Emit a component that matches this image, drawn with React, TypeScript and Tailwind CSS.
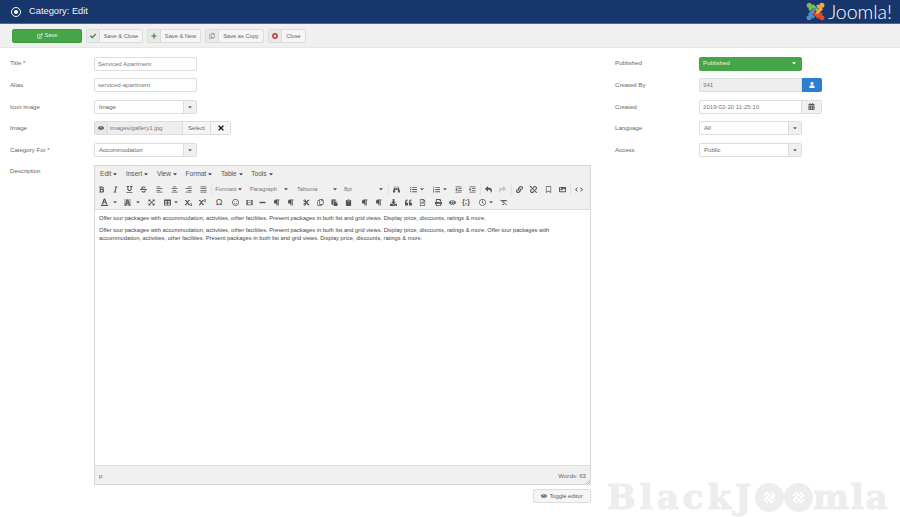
import React from 'react';
import {
  FaBold, FaItalic, FaUnderline, FaStrikethrough, FaAlignLeft, FaAlignCenter, FaAlignRight, FaAlignJustify,
  FaBinoculars, FaListUl, FaListOl, FaOutdent, FaIndent, FaReply, FaShare, FaLink, FaUnlink, FaRegBookmark, FaImage,
  FaFont, FaExpandArrowsAlt, FaTable, FaSubscript, FaSuperscript, FaRegSmile, FaFilm, FaMinus, FaParagraph,
  FaCut, FaRegCopy, FaPaste, FaClipboard, FaQuoteLeft, FaRegFileAlt, FaPrint, FaEye, FaRegClock, FaRemoveFormat,
  FaCheck, FaPlus, FaRegEdit, FaTimes, FaTimesCircle, FaUser, FaCalendarAlt, FaCaretDown, FaChevronLeft, FaChevronRight, FaDownload,
} from 'react-icons/fa';

const Caret = ({ className = 'text-[#666]' }: { className?: string }) => <FaCaretDown className={`w-[6px] h-[6px] ${className}`} />;

const Label = ({ children }: { children: React.ReactNode }) => <div className="w-[84px] pb-[1px] text-[#666]">{children}</div>;

const Field = ({ label, children }: { label: string; children: React.ReactNode }) => (
  <div className="flex items-center h-[14px]">
    <Label>{label}</Label>
    {children}
  </div>
);

const Input = ({ value }: { value: string }) => (
  <div className="w-[103px] h-[14px] border border-[#dddddd] rounded-[2px] bg-white px-[3px] leading-[11px] text-[#777]">{value}</div>
);

const Select = ({ value }: { value: string }) => (
  <div className="w-[103px] h-[14px] flex border border-[#dddddd] rounded-[2px] bg-white leading-[11px] text-[#666]">
    <div className="flex-1 px-[4px]">{value}</div>
    <div className="w-[13px] bg-[#f0f0f0] border-l border-[#dddddd] flex items-center justify-center"><Caret /></div>
  </div>
);

const ToolButton = ({ icon, label, w }: { icon: React.ReactNode; label: string; w: string }) => (
  <div className={`${w} h-[14px] flex border border-[#dcdcdc] rounded-[2px] bg-[#f5f5f5] text-[#666] text-[5.7px] leading-[12px]`}>
    <div className="w-[13px] shrink-0 bg-[#e8e8e8] border-r border-[#dcdcdc] flex items-center justify-center">{icon}</div>
    <div className="flex-1 text-center whitespace-nowrap">{label}</div>
  </div>
);

const Tb = ({ children, w = 'w-[14px]', ml = '' }: { children: React.ReactNode; w?: string; ml?: string }) => (
  <div className={`${w} ${ml} h-[13px] flex items-center justify-center gap-[2px] shrink-0 text-[#555] text-[7px]`}>{children}</div>
);

const Sep = () => <div className="w-[1px] h-[12px] bg-[#e2e2e2] mx-[1px] shrink-0" />;

const Drop = ({ label, w, pl }: { label: string; w: string; pl: string }) => (
  <div className={`${w} ${pl} h-[13px] flex items-center justify-between pr-[3px] shrink-0 text-[#777] text-[5.8px]`}>
    <span>{label}</span>
    <Caret className="text-[#555]" />
  </div>
);

const JoomlaLogo = () => (
  <svg viewBox="0 0 24 24" className="w-[19px] h-[19px]">
    <g fill="none" strokeWidth="3.6" strokeLinecap="round">
      <path d="M5 9 L9 5 L15 11" stroke="#7ac143" />
      <path d="M15 5 L19 9 L13 15" stroke="#f9a541" />
      <path d="M19 15 L15 19 L9 13" stroke="#f44321" />
      <path d="M9 19 L5 15 L11 9" stroke="#5091cd" />
    </g>
    <circle cx="4" cy="4" r="3.2" fill="#7ac143" />
    <circle cx="20" cy="4" r="3.2" fill="#f9a541" />
    <circle cx="20" cy="20" r="3.2" fill="#f44321" />
    <circle cx="4" cy="20" r="3.2" fill="#5091cd" />
  </svg>
);

const WatermarkO = () => (
  <span className="inline-flex w-[29px] h-[29px] shrink-0 rounded-full bg-[#ededed] items-center justify-center">
    <svg viewBox="0 0 24 24" className="w-[17px] h-[17px]">
      <g fill="none" stroke="#ffffff" strokeWidth="2.4" strokeLinecap="round">
        <path d="M5 9 L9 5 L15 11 M15 5 L19 9 L13 15 M19 15 L15 19 L9 13 M9 19 L5 15 L11 9" />
      </g>
    </svg>
  </span>
);

const para = 'Offer tour packages with accommodation, activities, other facilities. Present packages in both list and grid views. Display price, discounts, ratings & more.';
const paraTwice = `${para} ${para}`;

export default function App() {
  return (
    <div className="relative w-[900px] h-[517px] overflow-hidden bg-white text-[6.1px] font-['Liberation_Sans',sans-serif]">
      {/* header */}
      <div className="h-[24px] bg-[#17366b] border-b border-[#3f6ca8] flex items-center justify-between pl-[11px] pr-[8px]">
        <div className="flex items-center gap-[8px] text-[#f0f3f8] text-[9.3px]">
          <span className="w-[10px] h-[10px] rounded-full border-[1.5px] border-white flex items-center justify-center">
            <span className="w-[4px] h-[4px] rounded-full bg-white" />
          </span>
          Category: Edit
        </div>
        <div className="flex items-center gap-[3px]">
          <JoomlaLogo />
          <span className="text-white text-[19.5px] leading-none font-['Lato',sans-serif] font-light">Joomla!</span>
        </div>
      </div>

      {/* toolbar */}
      <div className="h-[24px] bg-[#f0f0f0] border-b border-[#e6e6e6] flex items-center pl-[12px] gap-[4px]">
        <div className="w-[70px] h-[14px] rounded-[2px] bg-[#46a546] border border-[#419a41] text-[#e6f3e6] text-[5.7px] flex items-center justify-center gap-[2px]">
          <FaRegEdit className="w-[6px] h-[6px]" /> Save
        </div>
        <ToolButton w="w-[57px]" icon={<FaCheck className="w-[6px] h-[6px] text-[#378137]" />} label="Save & Close" />
        <ToolButton w="w-[54px]" icon={<FaPlus className="w-[6px] h-[6px] text-[#378137]" />} label="Save & New" />
        <ToolButton w="w-[59px]" icon={<FaRegCopy className="w-[6px] h-[6px] text-[#888]" />} label="Save as Copy" />
        <ToolButton w="w-[38px]" icon={<FaTimesCircle className="w-[6px] h-[6px] text-[#bd362f]" />} label="Close" />
      </div>

      {/* form */}
      <div className="flex pl-[10px] pt-[8.5px]">
        <div className="w-[605px] shrink-0 flex flex-col">
          <div className="flex flex-col gap-[7.6px]">
            <Field label="Title *"><Input value="Serviced Apartment" /></Field>
            <Field label="Alias"><Input value="serviced-apartment" /></Field>
            <Field label="Icon image"><Select value="Image" /></Field>
            <Field label="Image">
              <div className="h-[14px] flex border border-[#dddddd] rounded-[2px] leading-[11px] text-[#666]">
                <div className="w-[13px] bg-[#e8e8e8] border-r border-[#dddddd] flex items-center justify-center"><FaEye className="w-[6px] h-[6px] text-[#444]" /></div>
                <div className="w-[74px] bg-[#eeeeee] px-[2px] text-[#777]">images/gallery1.jpg</div>
                <div className="w-[29px] bg-[#f5f5f5] border-x border-[#dddddd] text-center">Select</div>
                <div className="w-[19px] bg-[#f5f5f5] flex items-center justify-center"><FaTimes className="w-[8px] h-[8px] text-[#222]" /></div>
              </div>
            </Field>
            <Field label="Category For *"><Select value="Accommodation" /></Field>
          </div>

          <div className="flex mt-[8.5px]">
            <div className="w-[84px] text-[#666] pt-[0.5px]">Description</div>
            <div className="w-[497px]">
              <div className="h-[320px] border border-[#d8d8d8] flex flex-col">
                <div className="h-[16px] bg-[#f0f0f0] flex items-center pl-[5px] gap-[7.5px] text-[6.6px] text-[#555]">
                  {['Edit', 'Insert', 'View', 'Format', 'Table', 'Tools'].map((m) => (
                    <div key={m} className="flex items-center gap-[1px]">{m}<Caret className="text-[#444]" /></div>
                  ))}
                </div>
                <div className="h-[27px] bg-[#f0f0f0] flex flex-col justify-center">
                  <div className="flex items-center h-[13px]">
                    <Tb w="w-[13px]"><FaBold /></Tb><Tb w="w-[14.4px]"><FaItalic /></Tb><Tb w="w-[14.4px]"><FaUnderline /></Tb><Tb w="w-[14.4px]"><FaStrikethrough /></Tb>
                    <Tb w="w-[14.4px]" ml="ml-[1.6px]"><FaAlignLeft /></Tb><Tb w="w-[14.4px]"><FaAlignCenter /></Tb><Tb w="w-[14.4px]"><FaAlignRight /></Tb><Tb w="w-[14.4px]"><FaAlignJustify /></Tb>
                    <Sep />
                    <Drop label="Formats" w="w-[32.6px]" pl="pl-[2px]" /><Drop label="Paragraph" w="w-[46px]" pl="pl-[4px]" /><Drop label="Tahoma" w="w-[49px]" pl="pl-[5px]" /><Drop label="8pt" w="w-[46px]" pl="pl-[3px]" />
                    <Sep />
                    <Tb w="w-[13px]"><FaBinoculars /></Tb>
                    <Tb w="w-[22px]" ml="ml-[4px]"><FaListUl /><Caret /></Tb>
                    <Tb w="w-[22px]" ml="ml-[1px]"><FaListOl /><Caret /></Tb>
                    <Tb w="w-[13px]"><FaOutdent /></Tb><Tb w="w-[14.4px]"><FaIndent /></Tb>
                    <Sep />
                    <Tb w="w-[13px]"><FaReply /></Tb><Tb w="w-[15px]"><FaShare className="text-[#c4c4c4]" /></Tb>
                    <Sep />
                    <Tb w="w-[13px]"><FaLink /></Tb><Tb w="w-[15px]"><FaUnlink /></Tb><Tb><FaRegBookmark /></Tb><Tb><FaImage /></Tb>
                    <Sep />
                    <Tb w="w-[13px]"><FaChevronLeft className="w-[3px] h-[5px]" /><FaChevronRight className="w-[3px] h-[5px]" /></Tb>
                  </div>
                  <div className="flex items-center h-[13px]">
                    <Tb w="w-[22px]" ml="ml-[3px]"><span className="border-b border-[#555] mr-[2px] flex"><FaFont /></span><Caret /></Tb>
                    <Tb w="w-[22px]" ml="ml-[1px]"><span className="bg-[#bbb] mr-[2px] flex"><FaFont /></span><Caret /></Tb>
                    <Tb w="w-[16px]"><FaExpandArrowsAlt /></Tb>
                    <Tb w="w-[22px]" ml="ml-[1px]"><FaTable /><Caret /></Tb>
                    <Tb w="w-[13px]"><FaSubscript /></Tb><Tb w="w-[15px]"><FaSuperscript /></Tb>
                    <Tb w="w-[18px]"><span className="text-[9px] leading-none">Ω</span></Tb>
                    <Tb><FaRegSmile /></Tb><Tb><FaFilm /></Tb><Tb w="w-[13px]"><FaMinus /></Tb>
                    <Tb><FaParagraph /></Tb><Tb><FaParagraph /></Tb>
                    <Tb ml="ml-[2px]"><FaCut /></Tb><Tb><FaRegCopy /></Tb><Tb><FaPaste /></Tb><Tb><FaClipboard /></Tb>
                    <Tb ml="ml-[2px]"><FaParagraph /></Tb><Tb w="w-[15px]"><FaParagraph /></Tb>
                    <Tb w="w-[15px]"><FaDownload /></Tb><Tb><FaQuoteLeft /></Tb><Tb><FaRegFileAlt /></Tb>
                    <Tb ml="ml-[2px]"><FaPrint /></Tb><Tb><FaEye /></Tb>
                    <Tb><span className="font-bold">{'{;}'}</span></Tb>
                    <Tb w="w-[22px]" ml="ml-[2px]"><FaRegClock /><Caret /></Tb>
                    <Tb w="w-[13px]"><FaRemoveFormat /></Tb>
                  </div>
                </div>
                <div className="flex-1 bg-white border-y border-[#dddddd] px-[4px] pt-[5px] text-[5.72px] leading-[7.6px] text-[#444]">
                  <p className="mb-[4.4px]">{para}</p>
                  <p>{paraTwice}</p>
                </div>
                <div className="relative h-[18px] bg-[#f0f0f0] flex items-center justify-between pl-[4px] pr-[4px] text-[#666]">
                  <span>p</span>
                  <span>Words: 63</span>
                  <svg viewBox="0 0 6 6" className="absolute right-[0px] bottom-[0px] w-[4px] h-[4px]">
                    <path d="M6 0 L0 6 M6 3 L3 6" stroke="#aaaaaa" strokeWidth="1" />
                  </svg>
                </div>
              </div>
              <div className="flex justify-end mt-[3.5px]">
                <div className="h-[14px] w-[58px] bg-[#f5f5f5] border border-[#dddddd] rounded-[2px] flex items-center justify-center gap-[2px] text-[#555] text-[5.8px]">
                  <FaEye className="w-[6px] h-[6px]" /> Toggle editor
                </div>
              </div>
            </div>
          </div>
        </div>

        <div className="flex flex-col gap-[7.6px]">
          <div className="flex items-center h-[14px]">
            <Label>Published</Label>
            <div className="w-[103px] h-[14px] rounded-[2px] bg-[#46a546] text-[#e6f3e6] flex items-center justify-between pl-[4px] pr-[5px] pb-[1px]">Published <Caret className="text-white" /></div>
          </div>
          <div className="flex items-center h-[14px]">
            <Label>Created By</Label>
            <div className="w-[103px] h-[14px] bg-[#eeeeee] border border-[#dddddd] rounded-l-[2px] px-[3px] leading-[11px] text-[#777]">341</div>
            <div className="w-[20px] h-[14px] bg-[#2a7fcf] rounded-r-[2px] flex items-center justify-center"><FaUser className="w-[6px] h-[6px] text-white" /></div>
          </div>
          <div className="flex items-center h-[14px]">
            <Label>Created</Label>
            <div className="w-[103px] h-[14px] bg-white border border-[#dddddd] rounded-l-[2px] px-[3px] leading-[11px] text-[#777]">2019-02-20 11:25:10</div>
            <div className="w-[20px] h-[14px] bg-[#f0f0f0] border border-l-0 border-[#dddddd] rounded-r-[2px] flex items-center justify-center"><FaCalendarAlt className="w-[7px] h-[7px] text-[#555]" /></div>
          </div>
          <Field label="Language"><Select value="All" /></Field>
          <Field label="Access"><Select value="Public" /></Field>
        </div>
      </div>

      {/* watermark */}
      <div className="absolute left-[607px] top-[479px] h-[36px] flex items-center text-[#ededed] font-['DejaVu_Serif',serif] font-bold text-[34px] leading-[36px] tracking-[4px] [-webkit-text-stroke:1px_#ededed] whitespace-nowrap select-none">
        <span>BlackJ</span><WatermarkO /><WatermarkO /><span className="tracking-[1.8px]">mla</span>
      </div>
    </div>
  );
}
